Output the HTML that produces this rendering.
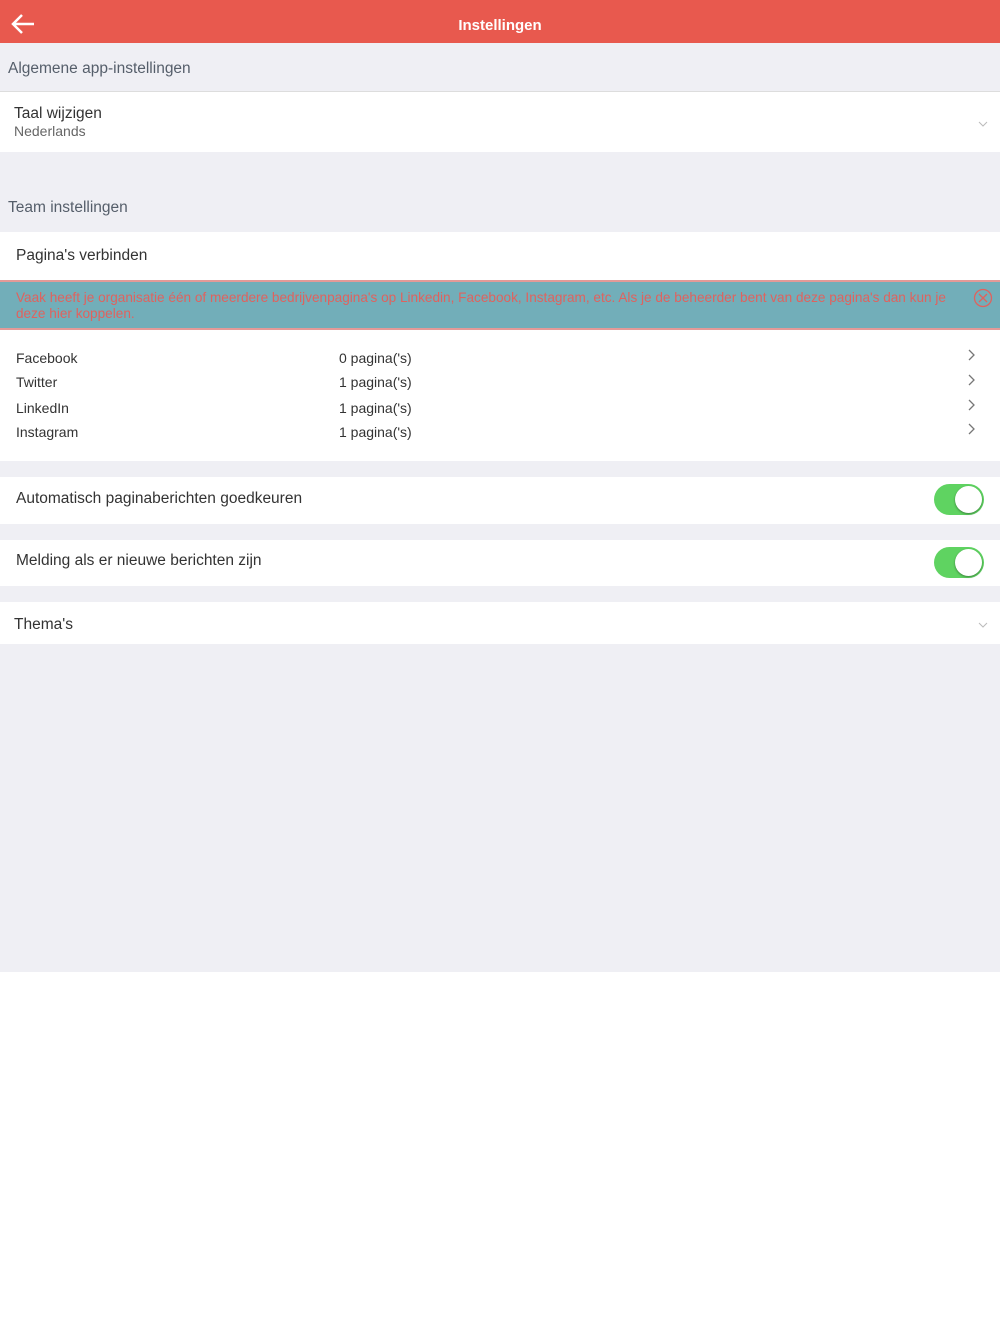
<!DOCTYPE html>
<html><head><style>
*{margin:0;padding:0;box-sizing:border-box}
body{width:1000px;height:1334px;background:#fff;font-family:"Liberation Sans",sans-serif;position:relative;overflow:hidden}
.a{position:absolute;left:0;width:1000px}
.g{background:#efeff4}
.w{background:#fff}
.t{position:absolute;font-size:15.5px;color:#333}
</style></head><body>
<div class="a" style="top:0;height:43px;background:#e8594e"></div>
<svg style="position:absolute;left:10px;top:13px" width="26" height="22" viewBox="0 0 26 22"><path d="M24 11H3M12 2L3 11l9 9" stroke="#fff" stroke-width="2.5" fill="none"/></svg>
<div class="t" style="top:17px;left:0;width:1000px;text-align:center;color:#fff;font-weight:bold;font-size:15px">Instellingen</div>
<div class="a g" style="top:43px;height:49px;border-bottom:1px solid #ddd"></div>
<div class="t" style="top:60px;left:8px;color:#555e6a">Algemene app-instellingen</div>
<div class="a w" style="top:92px;height:60px"></div>
<div class="t" style="top:105px;left:14px">Taal wijzigen</div>
<div class="t" style="top:123px;left:14px;font-size:14px;color:#666">Nederlands</div>
<svg style="position:absolute;left:978px;top:120px" width="10" height="8"><path d="M1 2l4 4 4-4" stroke="#bbb" fill="none"/></svg>
<div class="a g" style="top:152px;height:80px"></div>
<div class="t" style="top:199px;left:8px;color:#555e6a">Team instellingen</div>
<div class="a w" style="top:232px;height:49px"></div>
<div class="t" style="top:247px;left:16px">Pagina's verbinden</div>
<div class="a" style="top:280px;height:50px;background:#72aeb9;border-top:2px solid #e49a98;border-bottom:2px solid #e49a98"></div>
<div class="t" style="top:290px;left:16px;width:945px;font-size:13.6px;line-height:16px;color:#e0625e">Vaak heeft je organisatie één of meerdere bedrijvenpagina's op Linkedin, Facebook, Instagram, etc. Als je de beheerder bent van deze pagina's dan kun je deze hier koppelen.</div>
<svg style="position:absolute;left:973px;top:288px" width="20" height="20"><circle cx="10" cy="10" r="8.5" stroke="#e0625e" stroke-width="1.3" fill="none"/><path d="M6 6l8 8M14 6l-8 8" stroke="#e0625e" stroke-width="1.3"/></svg>
<div class="t" style="top:350px;left:16px;font-size:14px">Facebook</div><div class="t" style="top:350px;left:339px;font-size:14px">0 pagina('s)</div>
<div class="t" style="top:374px;left:16px;font-size:14px">Twitter</div><div class="t" style="top:374px;left:339px;font-size:14px">1 pagina('s)</div>
<div class="t" style="top:400px;left:16px;font-size:14px">LinkedIn</div><div class="t" style="top:400px;left:339px;font-size:14px">1 pagina('s)</div>
<div class="t" style="top:424px;left:16px;font-size:14px">Instagram</div><div class="t" style="top:424px;left:339px;font-size:14px">1 pagina('s)</div>
<svg style="position:absolute;left:966px;top:348px" width="12" height="95"><g stroke="#777" stroke-width="1.3" fill="none"><path d="M3 2l5 5-5 5"/><path d="M3 27l5 5-5 5"/><path d="M3 52l5 5-5 5"/><path d="M3 76l5 5-5 5"/></g></svg>
<div class="a g" style="top:461px;height:16px"></div>
<div class="t" style="top:490px;left:16px">Automatisch paginaberichten goedkeuren</div>
<div class="a g" style="top:524px;height:16px"></div>
<div class="t" style="top:552px;left:16px">Melding als er nieuwe berichten zijn</div>
<div style="position:absolute;left:934px;top:484px;width:50px;height:31px;border-radius:16px;background:#5fd361"><div style="position:absolute;right:2px;top:2px;width:27px;height:27px;border-radius:50%;background:#fff;box-shadow:0 1px 2px rgba(0,0,0,.4)"></div></div>
<div style="position:absolute;left:934px;top:547px;width:50px;height:31px;border-radius:16px;background:#5fd361"><div style="position:absolute;right:2px;top:2px;width:27px;height:27px;border-radius:50%;background:#fff;box-shadow:0 1px 2px rgba(0,0,0,.4)"></div></div>
<div class="a g" style="top:586px;height:16px"></div>
<div class="t" style="top:616px;left:14px">Thema's</div>
<svg style="position:absolute;left:978px;top:621px" width="10" height="8"><path d="M1 2l4 4 4-4" stroke="#bbb" fill="none"/></svg>
<div class="a g" style="top:644px;height:328px"></div>
</body></html>
